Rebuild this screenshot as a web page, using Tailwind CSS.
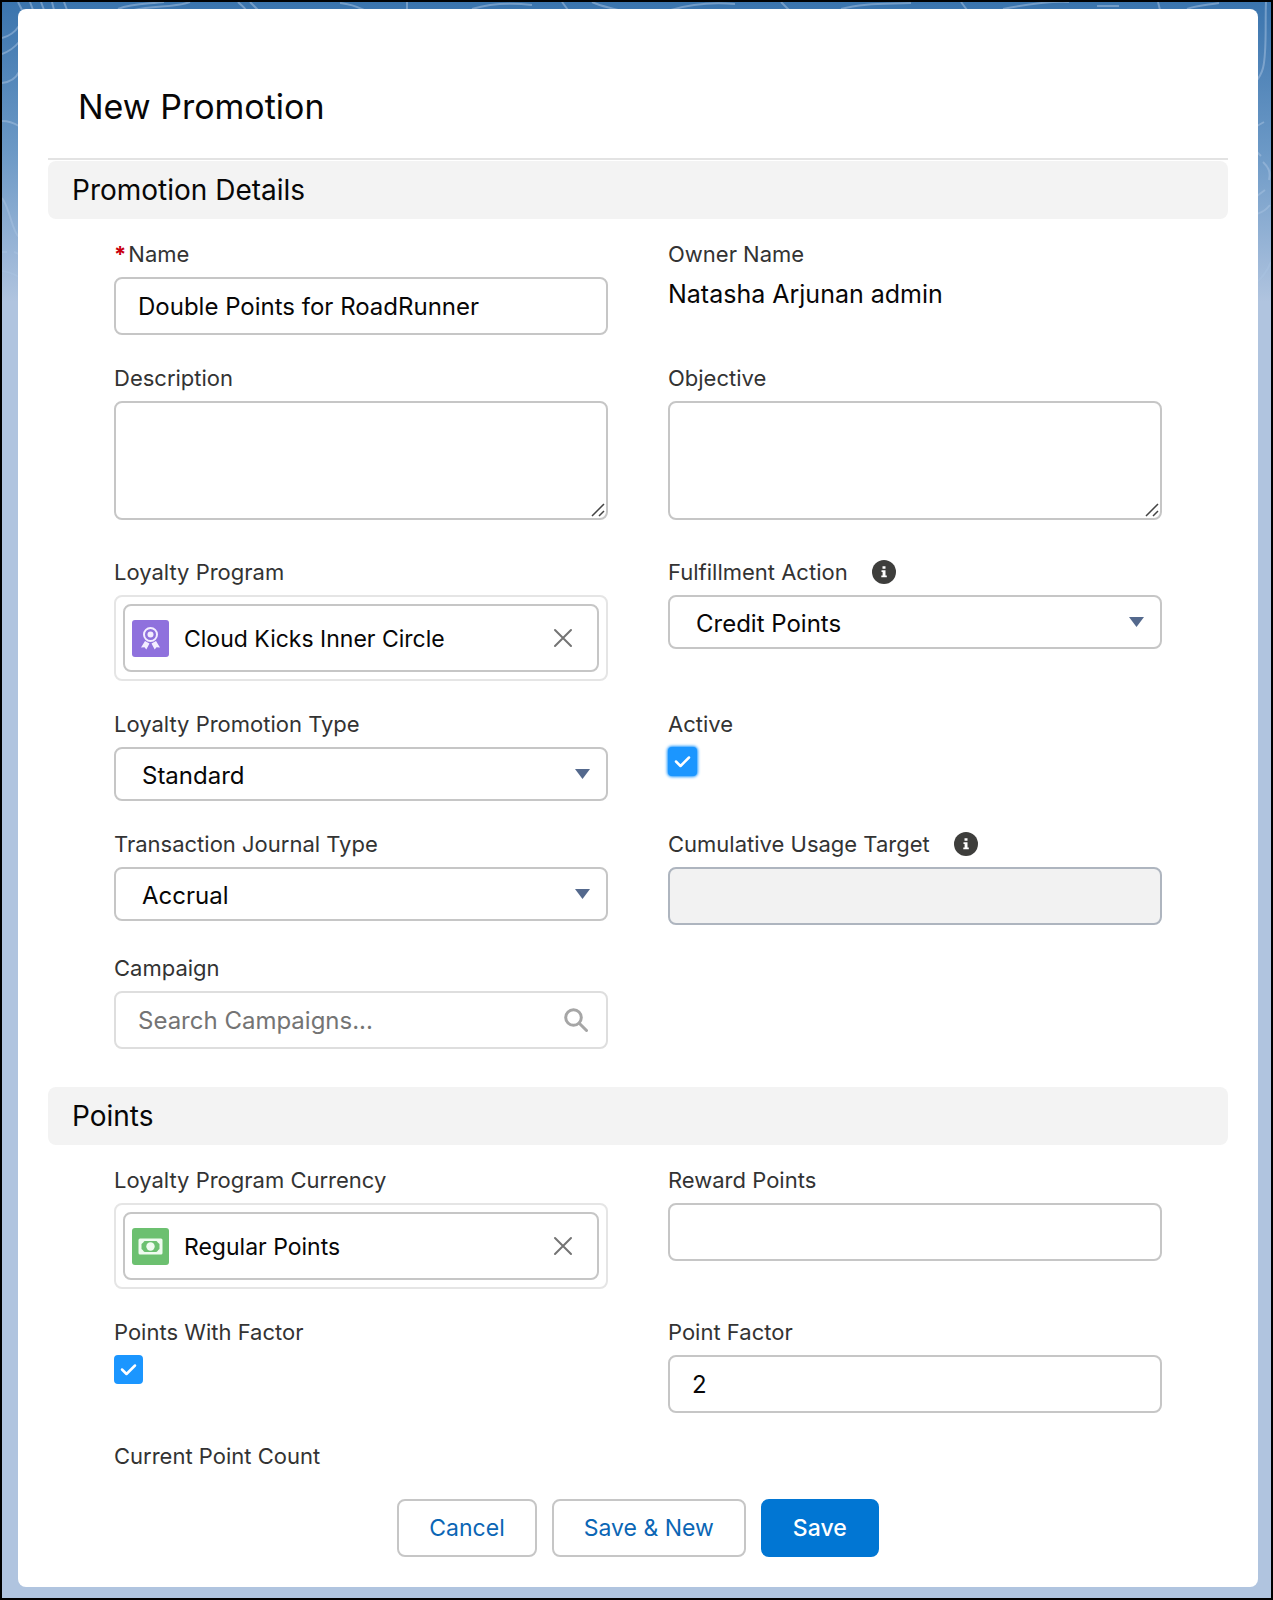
<!DOCTYPE html>
<html lang="en">
<head>
  <meta charset="UTF-8">
  <meta name="viewport" content="width=device-width, initial-scale=1">
  <title>New Promotion</title>
  <script src="https://cdn.jsdelivr.net/npm/@tailwindcss/browser@4"></script>
</head>
<body class="relative min-h-screen border-2 border-black bg-[#b0c4df] pt-[7px] pr-[13px] pb-[11px] pl-4 font-[Inter,'Liberation_Sans',sans-serif] text-2xl text-[#080707]">

  <!-- Page backdrop: blue gradient with contour lines -->
  <div class="absolute inset-x-0 top-0 h-[300px] overflow-hidden bg-linear-to-b from-[#3a74ad] via-[#6c99c6] via-50% to-[#b0c4df]">
    <svg class="absolute top-0 left-0" width="640" height="300" fill="none" stroke="#a9c3e2" stroke-opacity=".5" stroke-width="2">
      <path d="M0 36c8-2 13-6 17-12M0 52c8-3 13-7 17-12M0 81c8-1 14-5 17-11M0 119c7 0 12 2 17 5M0 196c8 10 10 34 17 39M0 250h5M12 250l5 2M0 269c7 1 12 3 17 6"/>
      <path d="M16 0l4 8M28 0l3 8M39 0l3 8M50 0l2 8M62 0l3 8M116 7c14-6 30-5 46-7M132 8c20-5 40-2 56-8M236 0c4 4 6 5 8 8M248 0l8 8M338 1c10 1 18 4 24 7M405 0v8M470 7c20-6 42-6 60-4M560 0l6 8M590 0c8 4 16 5 26 8"/>
    </svg>
    <svg class="absolute top-0 right-0" width="640" height="300" fill="none" stroke="#a9c3e2" stroke-opacity=".5" stroke-width="2">
      <path d="M40 8c20-6 40-8 64-6M150 0l8 8M210 7c20-6 46-5 70-6M330 0l6 8M372 7c20-4 44-8 66-7M466 4h22M527 0l2 8M556 7c12-4 22-4 32-6"/>
      <path d="M635 0c-1 24 1 50-3 66-2 8-5 11-9 16M626 124l7-4M626 150l4 4M632 160c5 5 8 9 6 18M626 194l8-6M626 212c6-2 10-5 13-9M626 280c6-5 10-11 14-20"/>
    </svg>
  </div>

  <main class="relative rounded-lg bg-white px-[30px] pb-[30px]">
    <header class="border-b-2 border-[#e3e3e3] px-[30px] pt-[74px] pb-[27px]">
      <h1 class="text-[34px] leading-[48px]">New Promotion</h1>
    </header>

    <form>
      <section>
        <h2 class="mt-px rounded-lg bg-[#f3f3f3] px-6 text-[28px] leading-[58px]">Promotion Details</h2>

        <div class="grid grid-cols-2 gap-x-[60px] gap-y-[27px] px-[66px] pt-[19px] pb-[38px]">
          <div>
            <label for="name" class="mb-[7px] flex gap-0.5 text-[22px] leading-8 text-[#333]"><span class="font-bold text-[#c9000f]">*</span>Name</label>
            <input id="name" type="text" required value="Double Points for RoadRunner" class="block h-[58px] w-full rounded-lg border-2 border-[#c6c6c6] bg-white px-[22px] text-2xl">
          </div>
          <div>
            <div class="text-[22px] leading-8 text-[#333]">Owner Name</div>
            <div class="mt-2 text-[25px] leading-8">Natasha Arjunan admin</div>
          </div>

          <div>
            <label for="description" class="mb-[7px] block text-[22px] leading-8 text-[#333]">Description</label>
            <div class="relative mb-[9px]">
              <textarea id="description" class="block h-[119px] w-full resize-y rounded-lg border-2 border-[#c6c6c6] bg-white px-[22px] py-3 text-2xl [&::-webkit-resizer]:hidden"></textarea>
              <svg class="pointer-events-none absolute right-[3px] bottom-[3px]" width="14" height="14" fill="none" stroke="#444" stroke-width="1.5"><path d="M1 13L13 1M8 13l5-5"/></svg>
            </div>
          </div>
          <div>
            <label for="objective" class="mb-[7px] block text-[22px] leading-8 text-[#333]">Objective</label>
            <div class="relative mb-[9px]">
              <textarea id="objective" class="block h-[119px] w-full resize-y rounded-lg border-2 border-[#c6c6c6] bg-white px-[22px] py-3 text-2xl [&::-webkit-resizer]:hidden"></textarea>
              <svg class="pointer-events-none absolute right-[3px] bottom-[3px]" width="14" height="14" fill="none" stroke="#444" stroke-width="1.5"><path d="M1 13L13 1M8 13l5-5"/></svg>
            </div>
          </div>

          <div>
            <label for="program" class="mb-[7px] block text-[22px] leading-8 text-[#333]">Loyalty Program</label>
            <div class="rounded-lg border-2 border-[#e5e5e5] p-[7px]">
              <div class="flex h-[68px] items-center rounded-lg border-2 border-[#c6c6c6] pr-5 pl-[7px]">
                <svg class="shrink-0" width="37" height="37" viewBox="0 0 37 37" fill="none">
                  <rect width="37" height="37" rx="3" fill="#8f71dd"/>
                  <circle cx="18.500" cy="14.500" r="6.500" stroke="#f3edff" stroke-width="2"/>
                  <circle cx="18.500" cy="14.500" r="3" fill="#f3edff"/>
                  <path d="M13 21l-4 6.500 3.500-.3 1.800 2.300 3.200-6zM24 21l4 6.500-3.500-.3-1.800 2.300-3.200-6z" fill="#f3edff"/>
                </svg>
                <input id="program" type="text" readonly value="Cloud Kicks Inner Circle" class="min-w-0 flex-1 pt-0.5 pl-[15px] text-[23px] outline-none">
                <button type="button" aria-label="Clear Loyalty Program" class="p-1">
                  <svg width="20" height="20" fill="none" stroke="#747474" stroke-width="2" stroke-linecap="round"><path d="M2 2l16 16M18 2L2 18"/></svg>
                </button>
              </div>
            </div>
          </div>
          <div>
            <div class="mb-[7px] flex items-center gap-6 text-[22px] leading-8 text-[#333]">
              <label for="action">Fulfillment Action</label>
              <button type="button" aria-label="Help for Fulfillment Action">
                <svg width="24" height="24" viewBox="0 0 24 24"><circle cx="12" cy="12" r="12" fill="#3e3e3c"/><path d="M10.500 6.200h3v2.600h-3zM9.500 10.200h4v5.200h1.300v1.800H9.300v-1.800h1.300V12H9.500z" fill="#fff"/></svg>
              </button>
            </div>
            <div class="relative">
              <select id="action" class="block h-[54px] w-full appearance-none rounded-lg border-2 border-[#c6c6c6] bg-white pt-1 pr-12 pl-[26px] text-2xl"><option>Credit Points</option></select>
              <svg class="pointer-events-none absolute top-[22px] right-[18px]" width="15" height="10"><path d="M0 0h15L7.500 10z" fill="#54698d"/></svg>
            </div>
          </div>

          <div>
            <label for="type" class="mb-[7px] block text-[22px] leading-8 text-[#333]">Loyalty Promotion Type</label>
            <div class="relative">
              <select id="type" class="block h-[54px] w-full appearance-none rounded-lg border-2 border-[#c6c6c6] bg-white pt-1 pr-12 pl-[26px] text-2xl"><option>Standard</option></select>
              <svg class="pointer-events-none absolute top-[22px] right-[18px]" width="15" height="10"><path d="M0 0h15L7.500 10z" fill="#54698d"/></svg>
            </div>
          </div>
          <div>
            <label for="active" class="mb-[7px] block text-[22px] leading-8 text-[#333]">Active</label>
            <div class="relative size-[29px]">
              <input id="active" type="checkbox" checked class="block size-full appearance-none rounded-sm border-2 border-[#c6c6c6] shadow-[0_0_3px_1px_#1b96ff] checked:border-[#1b96ff] checked:bg-[#1b96ff]">
              <svg class="pointer-events-none absolute inset-0" width="29" height="29" fill="none" stroke="#fff" stroke-width="2.500" stroke-linecap="round" stroke-linejoin="round"><path d="M8 14.500l4.500 4.500L21 10.500"/></svg>
            </div>
          </div>

          <div>
            <label for="journal" class="mb-[7px] block text-[22px] leading-8 text-[#333]">Transaction Journal Type</label>
            <div class="relative">
              <select id="journal" class="block h-[54px] w-full appearance-none rounded-lg border-2 border-[#c6c6c6] bg-white pt-1 pr-12 pl-[26px] text-2xl"><option>Accrual</option></select>
              <svg class="pointer-events-none absolute top-[22px] right-[18px]" width="15" height="10"><path d="M0 0h15L7.500 10z" fill="#54698d"/></svg>
            </div>
          </div>
          <div>
            <div class="mb-[7px] flex items-center gap-6 text-[22px] leading-8 text-[#333]">
              <label for="target">Cumulative Usage Target</label>
              <button type="button" aria-label="Help for Cumulative Usage Target">
                <svg width="24" height="24" viewBox="0 0 24 24"><circle cx="12" cy="12" r="12" fill="#3e3e3c"/><path d="M10.500 6.200h3v2.600h-3zM9.500 10.200h4v5.200h1.300v1.800H9.300v-1.800h1.300V12H9.500z" fill="#fff"/></svg>
              </button>
            </div>
            <input id="target" type="text" disabled class="block h-[58px] w-full rounded-lg border-2 border-[#aeb5bf] bg-[#f2f2f2] px-[22px] text-2xl">
          </div>

          <div>
            <label for="campaign" class="mb-[7px] block text-[22px] leading-8 text-[#333]">Campaign</label>
            <div class="relative">
              <input id="campaign" type="search" placeholder="Search Campaigns..." class="block h-[58px] w-full rounded-lg border-2 border-[#dedede] bg-white pr-14 pl-[22px] text-2xl placeholder:text-[#747474]">
              <svg class="pointer-events-none absolute top-[17px] right-5" width="24" height="24" fill="none" stroke="#a6a6a6" stroke-width="3" stroke-linecap="round"><circle cx="9.500" cy="9.500" r="7.800"/><path d="M15.500 15.500l7 7"/></svg>
            </div>
          </div>
        </div>
      </section>

      <section>
        <h2 class="rounded-lg bg-[#f3f3f3] px-6 text-[28px] leading-[58px]">Points</h2>

        <div class="grid grid-cols-2 gap-x-[60px] gap-y-[27px] px-[66px] pt-[19px] pb-[27px]">
          <div>
            <label for="currency" class="mb-[7px] block text-[22px] leading-8 text-[#333]">Loyalty Program Currency</label>
            <div class="rounded-lg border-2 border-[#e5e5e5] p-[7px]">
              <div class="flex h-[68px] items-center rounded-lg border-2 border-[#c6c6c6] pr-5 pl-[7px]">
                <svg class="shrink-0" width="37" height="37" viewBox="0 0 37 37" fill="none">
                  <rect width="37" height="37" rx="3" fill="#6cc070"/>
                  <rect x="6.500" y="10.500" width="24" height="16" rx="1.500" fill="#f0fbf0"/>
                  <path d="M13 13h11c1.500 0 1.500 2 3.500 3v5c-2 1-2 3-3.500 3H13c-1.500 0-1.500-2-3.500-3v-5c2-1 2-3 3.500-3z" fill="#6cc070"/>
                  <circle cx="18.500" cy="18.500" r="4.200" fill="#f0fbf0"/>
                </svg>
                <input id="currency" type="text" readonly value="Regular Points" class="min-w-0 flex-1 pt-0.5 pl-[15px] text-[23px] outline-none">
                <button type="button" aria-label="Clear Loyalty Program Currency" class="p-1">
                  <svg width="20" height="20" fill="none" stroke="#747474" stroke-width="2" stroke-linecap="round"><path d="M2 2l16 16M18 2L2 18"/></svg>
                </button>
              </div>
            </div>
          </div>
          <div>
            <label for="reward" class="mb-[7px] block text-[22px] leading-8 text-[#333]">Reward Points</label>
            <input id="reward" type="text" class="block h-[58px] w-full rounded-lg border-2 border-[#c6c6c6] bg-white px-[22px] text-2xl">
          </div>

          <div>
            <label for="with-factor" class="mb-[7px] block text-[22px] leading-8 text-[#333]">Points With Factor</label>
            <div class="relative size-[29px]">
              <input id="with-factor" type="checkbox" checked class="block size-full appearance-none rounded-sm border-2 border-[#c6c6c6] checked:border-[#1b96ff] checked:bg-[#1b96ff]">
              <svg class="pointer-events-none absolute inset-0" width="29" height="29" fill="none" stroke="#fff" stroke-width="2.500" stroke-linecap="round" stroke-linejoin="round"><path d="M8 14.500l4.500 4.500L21 10.500"/></svg>
            </div>
          </div>
          <div>
            <label for="factor" class="mb-[7px] block text-[22px] leading-8 text-[#333]">Point Factor</label>
            <input id="factor" type="text" value="2" class="block h-[58px] w-full rounded-lg border-2 border-[#c6c6c6] bg-white px-[22px] text-2xl">
          </div>

          <div class="text-[22px] leading-8 text-[#333]">Current Point Count</div>
        </div>
      </section>

      <footer class="flex justify-center gap-[15px]">
        <button type="button" class="h-[58px] rounded-lg border-2 border-[#c6c6c6] bg-white px-[30px] text-[23px] text-[#0b66b5]">Cancel</button>
        <button type="button" class="h-[58px] rounded-lg border-2 border-[#c6c6c6] bg-white px-[30px] text-[23px] text-[#0b66b5]">Save &amp; New</button>
        <button type="submit" class="h-[58px] rounded-lg border-2 border-[#0176d3] bg-[#0176d3] px-[30px] text-[23px] font-medium text-white">Save</button>
      </footer>
    </form>
  </main>
</body>
</html>
